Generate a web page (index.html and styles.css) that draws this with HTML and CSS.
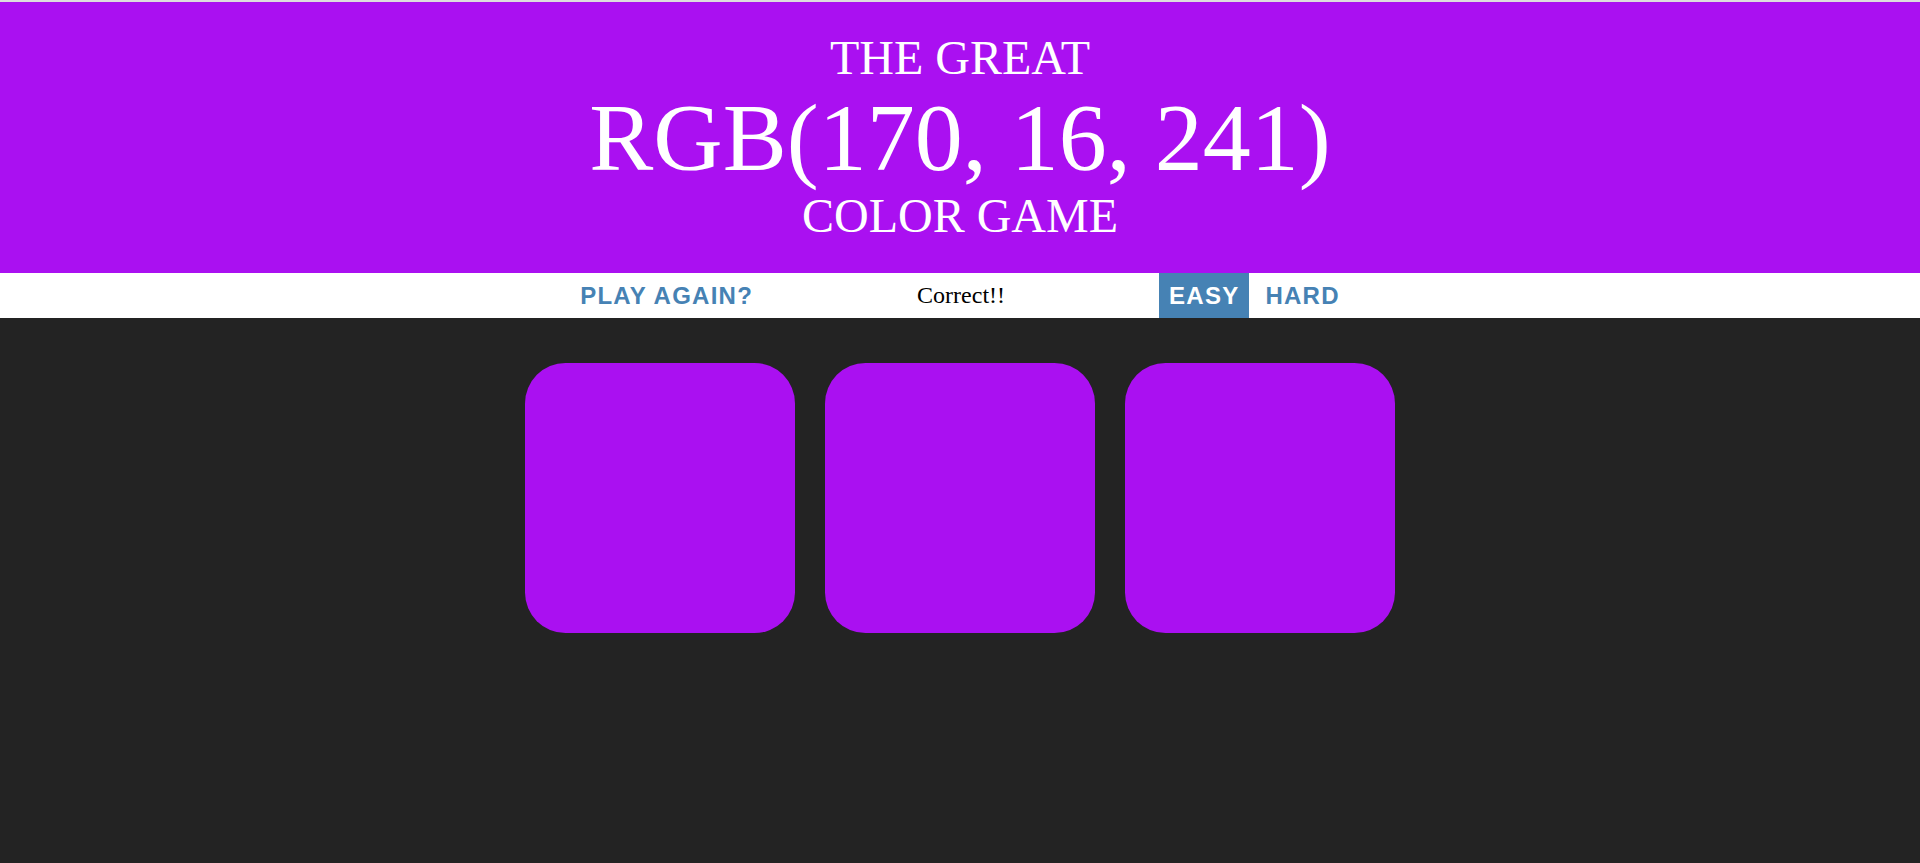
FILE: index.html
```html
<!DOCTYPE html>
<html lang="en">
<head>
<meta charset="utf-8">
<title>Color Game</title>
<link rel="stylesheet" href="styles.css">
</head>
<body>
<div class="topband"></div>
<h1 class="title">
  <span class="title-line">The Great</span>
  <span class="title-line color-display">rgb(170, 16, 241)</span>
  <span class="title-line">Color Game</span>
</h1>
<div class="stripe">
  <button class="btn">Play Again?</button>
  <span class="message">Correct!!</span>
  <button class="btn btn-selected">Easy</button>
  <button class="btn">Hard</button>
</div>
<div class="container">
  <div class="square"></div>
  <div class="square"></div>
  <div class="square"></div>
</div>
</body>
</html>
```

FILE: styles.css
```css
html, body {
  margin: 0;
  padding: 0;
}

body {
  background: #232323;
  font-family: "Liberation Serif", "Times New Roman", serif;
  min-height: 100vh;
}

.topband {
  height: 2px;
  background: #dddddd;
}

.title {
  margin: 0;
  padding: 30px 0;
  background: rgb(170, 16, 241);
  color: #ffffff;
  text-align: center;
  font-weight: normal;
  font-size: 48px;
  line-height: 1.1;
  text-transform: uppercase;
}

.title-line {
  display: block;
}

.color-display {
  font-size: 96px;
}

.stripe {
  height: 45px;
  background: #ffffff;
  display: flex;
  justify-content: center;
  align-items: stretch;
  gap: 6px;
}

.btn {
  border: none;
  background: none;
  margin: 0;
  padding: 0 10px;
  height: 100%;
  font-family: "Liberation Sans", Arial, sans-serif;
  font-size: 24px;
  font-weight: 700;
  letter-spacing: 1.25px;
  text-transform: uppercase;
  color: steelblue;
  outline: none;
  cursor: pointer;
}

.btn-selected {
  background: steelblue;
  color: #ffffff;
}

.message {
  width: 20%;
  text-align: center;
  font-size: 24px;
  line-height: 45px;
  color: #000000;
}

.container {
  width: 900px;
  margin: 30px auto 0;
  padding: 15px;
  box-sizing: border-box;
  display: grid;
  grid-template-columns: repeat(3, 270px);
  gap: 30px;
}

.square {
  width: 270px;
  height: 270px;
  border-radius: 15%;
  background: rgb(170, 16, 241);
}
```
